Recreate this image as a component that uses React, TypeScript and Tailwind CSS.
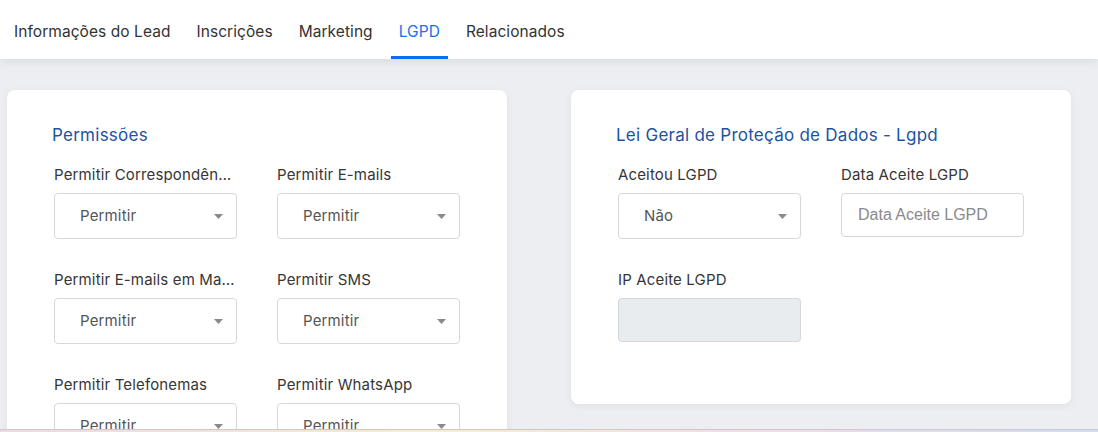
import { ReactNode } from "react";

const tabs = ["Informações do Lead", "Inscrições", "Marketing", "LGPD", "Relacionados"];

function Caret() {
  return (
    <svg width="9" height="5" viewBox="0 0 9 5" className="shrink-0">
      <path d="M0 0h9L4.5 5z" fill="#8a8a8a" />
    </svg>
  );
}

function SelectField({ label, value }: { label: string; value: string }) {
  return (
    <div className="w-[183px]">
      <div className="truncate text-[15px] leading-5 tracking-[0.01em] text-[#363636]">{label}</div>
      <div className="mt-[8px] flex h-[46px] items-center justify-between rounded-[4px] border border-[#d6d8db] bg-white pl-[25px] pr-[13px]">
        <span className="text-[15px] tracking-[0.01em] text-[#555]">{value}</span>
        <Caret />
      </div>
    </div>
  );
}

function InputField({ label, placeholder, disabled }: { label: string; placeholder?: string; disabled?: boolean }) {
  return (
    <div className="w-[183px]">
      <div className="truncate text-[15px] leading-5 tracking-[0.01em] text-[#363636]">{label}</div>
      <div
        className={
          disabled
            ? "mt-[8px] h-[44px] rounded-[4px] border border-[#d3d6da] bg-[#e9ecef]"
            : "mt-[8px] flex h-[44px] items-center rounded-[4px] border border-[#d6d8db] bg-white px-4"
        }
      >
        {placeholder && (
          <span className="font-['Liberation_Sans',Arial,sans-serif] text-[16px] text-[#8a8a8a]">{placeholder}</span>
        )}
      </div>
    </div>
  );
}

function Card({ title, children, className }: { title: string; children: ReactNode; className?: string }) {
  return (
    <div className={"w-[500px] rounded-lg bg-white pl-[45px] pt-[33px] shadow-[0_2px_8px_rgba(0,0,0,0.06)] " + (className ?? "")}>
      <h2 className="text-[17px] leading-6 tracking-[0.015em] text-[#1c53a3]">{title}</h2>
      {children}
    </div>
  );
}

export default function App() {
  return (
    <div className="relative h-[432px] overflow-hidden bg-[#eceef1] font-['Inter',sans-serif]">
      <nav className="relative z-10 flex h-[59px] gap-[10px] bg-white pl-[6px] shadow-[0_3px_10px_rgba(0,0,0,0.08)]">
        {tabs.map((t) => (
          <div
            key={t}
            className={
              t === "LGPD"
                ? "flex items-center border-b-[3px] border-[#0a6cf0] px-2 pt-[7px] text-[15.5px] tracking-[0.004em] text-[#1a6ef0]"
                : "flex items-center border-b-[3px] border-transparent px-2 pt-[7px] text-[15.5px] tracking-[0.004em] text-[#333]"
            }
          >
            {t}
          </div>
        ))}
      </nav>

      <div className="flex gap-16 pl-[7px] pt-[31px]">
        <Card title="Permissões" className="h-[400px]">
          <div className="mt-[18px] grid grid-cols-[183px_183px] gap-x-10 gap-y-[31px] pl-[2px]">
            <SelectField label="Permitir Correspondências" value="Permitir" />
            <SelectField label="Permitir E-mails" value="Permitir" />
            <SelectField label="Permitir E-mails em Massa" value="Permitir" />
            <SelectField label="Permitir SMS" value="Permitir" />
            <SelectField label="Permitir Telefonemas" value="Permitir" />
            <SelectField label="Permitir WhatsApp" value="Permitir" />
          </div>
        </Card>

        <Card title="Lei Geral de Proteção de Dados - Lgpd" className="h-[314px]">
          <div className="mt-[18px] grid grid-cols-[183px_183px] gap-x-10 gap-y-[31px] pl-[2px]">
            <SelectField label="Aceitou LGPD" value="Não" />
            <InputField label="Data Aceite LGPD" placeholder="Data Aceite LGPD" />
            <InputField label="IP Aceite LGPD" disabled />
          </div>
        </Card>
      </div>

      <div className="absolute bottom-0 left-0 right-0 h-[3px] border-t border-[#c9c9d0] bg-[linear-gradient(90deg,#f6d6e0,#f8eec8_40%,#f3dbe6_70%,#cfdcf0)]" />
    </div>
  );
}
